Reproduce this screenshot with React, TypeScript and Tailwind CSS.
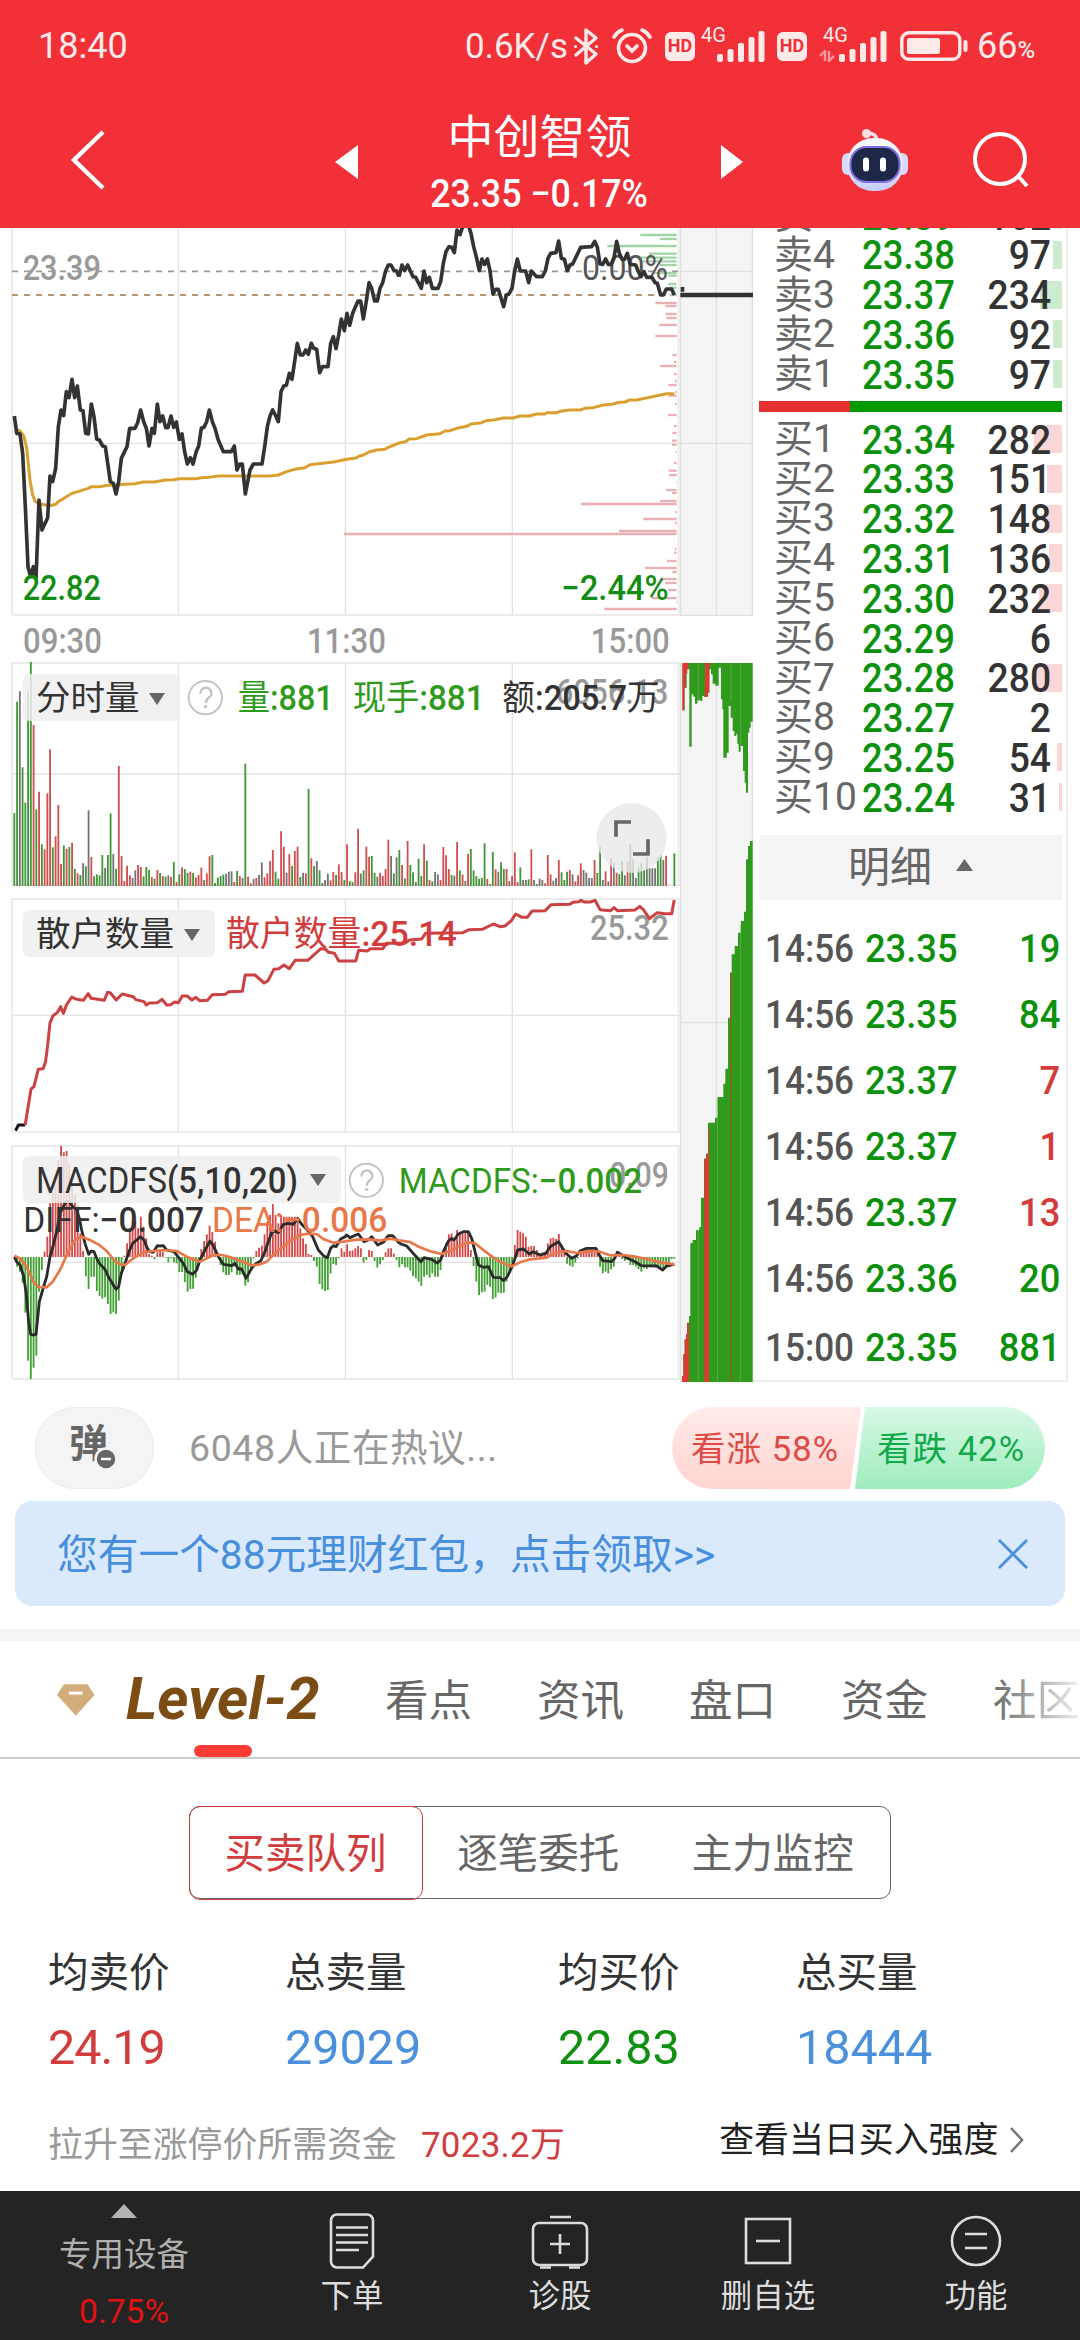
import type { ReactNode } from "react";
import clsx from "clsx";

const RED = "#d23c3c";
const GREEN = "#2f9a1c";
const GREY = "#999999";

// Chart coordinates use three units per pixel; the afternoon session starts 1020 units in.
const AFTERNOON = "translate(1020 0)";
const barX = (i: number) => 43 + 8.25 * i;

const priceMorning =
  "43,588 50,640 60,642 68,700 76,860 84,1040 92,1070 100,1040 108,1075 117,840 126,930 143,893 150,768 158,785 167,745 175,620 183,570 191,587 199,515 207,533 216,478 224,533 232,498 241,570 249,572 257,640 265,642 274,552 282,590 290,657 298,660 308,678 316,680 331,785 340,790 348,822 356,785 364,715 381,680 389,625 405,625 413,608 422,570 431,605 439,625 447,678 456,625 463,640 472,552 480,605 488,588 497,623 504,623 513,588 521,622 529,606 538,658 546,642 554,695 562,732 571,713 579,732 588,697 596,678 604,625 612,622 620,605 628,570 637,605 645,625 654,658 670,695 694,695 703,678 711,750 719,732 727,732 736,822 750,750 760,732 786,732 794,680 802,620 810,588 818,570 826,585 835,605 843,515 851,498 859,496 868,460 876,478 884,424 892,370 901,405 909,405 917,390 925,403 934,370 941,385 950,388 959,458 967,440 984,440 992,370 1000,350 1008,386 1016,345 1024,297 1033,332 1041,280 1049,316 1058,280 1074,243 1082,243 1090,297 1099,243 1107,188 1115,205 1124,243 1132,243 1140,205 1148,188 1157,152 1165,135 1173,135 1182,152 1190,153 1197,170";
const priceAfternoon =
  "177,170 186,135 194,152 203,135 219,170 227,172 244,205 252,153 260,188 268,172 277,205 294,205 302,185 310,130 318,95 327,80 335,82 343,98 351,30 360,44 368,20 385,15 393,40 401,80 410,115 418,152 426,117 434,133 442,117 450,152 459,222 467,208 475,208 491,260 499,225 507,222 516,205 524,153 532,117 541,153 557,153 566,188 574,153 590,170 607,170 616,153 624,115 632,100 648,98 656,63 664,115 673,118 682,152 690,135 698,132 722,82 755,80 764,64 772,82 780,132 788,133 797,117 805,133 814,133 822,115 830,64 838,100 846,117 854,118 862,100 871,133 887,135 895,155 903,170 912,155 920,172 936,172 945,188 952,190 962,225 970,225 979,207 995,207 1003,225";
const avgMorning =
  "50,628 62,635 72,650 80,685 90,780 98,825 106,845 120,852 150,857 167,853 175,845 216,820 265,805 274,800 298,800 325,796 348,795 372,793 405,791 430,786 463,786 497,780 521,779 538,776 588,776 604,773 628,772 654,768 810,768 835,765 860,755 884,748 915,743 930,734 967,730 1000,726 1040,718 1068,714 1078,708 1090,705 1107,696 1130,690 1155,688 1165,682 1197,669";
const avgAfternoon =
  "177,669 196,665 208,657 230,656 260,645 300,641 315,633 330,632 350,625 380,619 393,612 425,608 435,603 465,599 490,594 520,594 540,588 567,588 590,582 615,582 620,578 650,578 665,573 690,570 720,570 735,565 760,563 790,555 815,553 840,547 855,546 870,540 890,540 980,521 1003,521";

// Traded volume by price level: [y, bar start]
const levels: [number, number][] = [
  [45, 901], [57, 960], [78, 802], [101, 927], [113, 890], [124, 905], [135, 960], [159, 940], [167, 985], [192, 985], [203, 990], [225, 988],
  [249, 946], [258, 976], [282, 976], [294, 979], [315, 958], [348, 946], [405, 997], [426, 1002], [438, 960], [462, 1002], [483, 1005],
  [495, 985], [516, 1005], [527, 985], [552, 1005], [585, 984], [618, 1002], [639, 997], [662, 996], [674, 996], [696, 1007], [729, 1002],
  [752, 986], [765, 987], [786, 1008], [810, 978], [819, 996], [843, 960], [852, 722], [876, 1005], [897, 910], [909, 1005], [933, 837],
  [942, 12], [987, 1005], [998, 1002], [1023, 981], [1044, 915], [1056, 997], [1077, 960], [1089, 975], [1110, 984], [1134, 935], [1146, 1008], [1167, 793],
];

const volume =
  "g489 g155 k124 g352 g458 g124 g36 r225 g478 r425 g583 r598 r430 r298 g592 r559 r465 r642 g586 r596 g591 r578 g657 r670 g675 k640 g649 k481 r621 g679 g673 g676 g615 k654 g615 g490 k612 g656 r348 r618 r693 r647 r676 k684 k661 r645 r651 g679 g651 g660 r681 g686 r660 g669 r678 g680 k676 r681 g636 r696 g673 r652 g657 g669 r665 g669 r682 r675 r653 k690 r670 r619 g615 g699 g683 g678 g674 k671 k665 k664 r696 g663 r678 k684 g341 r680 r700 k687 r684 k675 k637 r682 r670 r633 r600 g665 g686 r544 r590 k668 r612 g648 r603 r590 g681 k668 r670 g417 r625 g648 k633 g661 k699 k690 k671 r691 r666 g675 r643 r666 g690 r583 g693 g696 r667 r536 k671 g661 r590 r621 g618 g669 k680 r668 r678 r657 r569 k618 g670 k622 g600 r645 g685 r573 g645 g667 k696 g626 g678 r583 g632 r690 g694 k666 k673 r690 r591 r616 r657 g675 k677 r576 g661 r674 k693 r612 g597 g661 g678 g686 g684 g580 r687 g702 g606 r658 k665 g637 g657 r657 k693 r678 r607 r696 g652 k690 k690 g688 r598 k690 g702 k686 k690 r700 r615 r673 k692 k684 r630 g667 g690 g665 r660 k673 r694 r676 r640 k660 k668 k684 k684 r630 g669 g590 k690 r664 k694 r624 k640 r668 g672 g634 k676 r634 g582 k628 k684 g652 g640 k660 g620 k655 k655 k655 g622 g615 k630 r617 g708 g708 g610".split(" ");

const volumeColor: Record<string, string> = { g: "#43953a", r: "#d04f4f", k: "#747474" };

const retail =
  "52,705 58,650 64,597 70,590 79,538 89,536 94,515 98,470 103,400 109,378 118,368 125,350 131,370 137,345 148,321 158,328 172,331 182,311 188,325 215,331 222,307 228,309 240,330 252,312 275,320 280,329 297,335 302,345 308,339 325,338 334,328 344,345 352,344 360,336 368,338 376,318 386,318 396,330 404,322 412,332 428,331 438,314 465,313 472,305 500,304 506,255 526,255 545,279 553,272 565,238 575,236 586,225 597,236 609,211 635,211 662,176 672,178 678,187 690,190 699,213 734,213 740,181 758,183 764,176 790,176 797,160 835,160 845,150 870,147 878,130 955,128 968,119 995,118 1018,102 1032,110 1042,108 1055,92 1064,72 1077,82 1088,82 1098,63 1125,62 1137,44 1175,43 1182,37 1195,35 1198,31 1206,36 1218,36 1228,31 1238,59 1260,62 1267,53 1274,62 1310,60 1320,49 1328,60 1340,86 1356,68 1372,71 1386,71 1391,30";

const MACD_ZERO = 366;
const macd = [
  366, 395, 410, 443, 533, 677, 732, 698, 662, 470, 405, 350, 305, 205, 172, 145, 75, 33, 52, 48, 90, 150, 178, 215, 295, 348, 424, 462, 425, 425, 468, 483, 491, 487, 507,
  537, 532, 537, 497, 415, 362, 325, 285, 258, 258, 280, 245, 275, 310, 358, 362, 373, 352, 345, 350, 368, 382, 370, 382, 385, 411, 411, 441, 470, 462, 461, 428, 390, 342,
  318, 298, 272, 291, 320, 355, 390, 412, 420, 420, 412, 395, 420, 420, 417, 452, 442, 400, 370, 348, 338, 332, 298, 260, 240, 207, 240, 265, 240, 245, 245, 245, 245, 245,
  255, 280, 310, 327, 357, 360, 378, 395, 447, 463, 468, 465, 416, 387, 390, 370, 340, 350, 328, 348, 346, 340, 333, 340, 383, 375, 345, 348, 378, 398, 388, 375, 352, 340,
  340, 356, 375, 397, 388, 397, 397, 407, 424, 430, 440, 453, 425, 420, 428, 415, 425, 425, 405, 355, 325, 298, 295, 315, 285, 293, 290, 290, 290, 345, 393, 440, 480, 472,
  470, 450, 455, 492, 487, 473, 474, 473, 440, 410, 385, 330, 285, 290, 295, 305, 336, 333, 333, 345, 355, 352, 350, 325, 310, 308, 312, 297, 330, 350, 386, 392, 395, 383,
  369, 355, 348, 345, 345, 345, 348, 355, 395, 415, 410, 415, 403, 395, 366, 362, 372, 378, 375, 390, 390, 395, 402, 410, 400, 402, 395, 390, 395, 395, 395, 400, 392, 385,
  372, 371,
];
const diffMorning =
  "43,366 50,380 60,390 70,420 78,470 86,560 92,598 99,600 108,598 112,560 118,500 128,465 140,425 150,365 160,330 170,290 180,235 190,215 198,200 208,200 218,215 230,225 238,250 245,285 255,325 266,358 274,348 282,350 290,370 300,388 315,403 325,425 348,463 356,455 364,415 375,385 389,345 398,325 410,315 422,305 432,315 440,335 448,350 460,352 472,332 480,333 490,332 500,345 522,350 538,370 550,385 562,410 578,418 590,405 600,375 615,345 630,318 640,332 655,365 670,388 695,392 705,385 715,402 725,402 738,430 755,400 765,388 782,378 795,350 805,320 815,293 825,288 835,293 850,268 865,265 880,268 893,250 905,268 922,285 938,305 955,345 970,362 982,368 992,340 1000,332 1008,335 1022,312 1035,305 1040,300 1050,308 1075,297 1092,320 1105,315 1115,305 1133,330 1150,322 1165,302 1178,302 1198,325";
const diffAfternoon =
  "178,325 200,333 215,350 235,372 243,380 252,368 275,373 292,384 302,375 310,350 325,318 335,310 342,315 355,297 370,290 385,290 395,310 405,350 415,390 430,397 445,395 460,427 480,428 491,437 502,425 515,398 525,370 533,345 550,342 568,357 580,350 600,360 618,355 630,335 656,320 668,340 678,355 695,370 710,362 720,348 740,340 768,340 778,360 788,377 815,380 824,370 832,352 860,368 885,380 905,392 950,393 968,405 980,393 1003,388";
const deaMorning =
  "43,362 60,370 80,395 100,440 115,456 140,457 158,440 180,405 205,350 225,315 245,305 270,315 295,328 320,348 345,378 360,388 375,390 400,370 430,352 460,348 490,345 530,348 560,365 600,380 640,360 665,360 690,366 720,377 755,391 780,388 800,380 830,350 870,318 900,300 925,296 950,297 970,312 1000,323 1030,320 1070,314 1110,313 1140,317 1170,311 1198,316";
const deaAfternoon =
  "178,316 210,321 240,337 275,350 305,357 330,348 360,332 385,322 405,325 430,345 460,368 490,385 515,394 540,382 570,373 620,368 650,352 680,348 710,354 740,350 775,349 810,361 850,360 880,364 920,372 960,382 1003,388";

// Call auction: [x, bar end] from the top edge, then from the bottom edge
const auctionTop: [number, number][] = [
  [1028, 178], [1034, 110], [1040, 55], [1048, 287], [1055, 130], [1060, 137], [1065, 158], [1072, 148], [1082, 150], [1087, 135], [1092, 137], [1103, 125], [1108, 55],
  [1113, 70], [1118, 98], [1126, 104], [1136, 50], [1143, 145], [1147, 175], [1150, 320], [1160, 305], [1166, 165], [1172, 200], [1178, 240], [1183, 255], [1189, 248], [1192, 278],
  [1196, 302], [1202, 285], [1209, 360], [1214, 395], [1218, 425], [1224, 245], [1228, 230], [1232, 212], [1238, 212],
];
const auctionBottom: [number, number][] = [
  [1026, 2175], [1030, 2110], [1034, 2065], [1038, 2050], [1041, 2015], [1047, 1995], [1051, 1776], [1058, 1767], [1068, 1738], [1078, 1728], [1083, 1640], [1092, 1523],
  [1098, 1508], [1104, 1415], [1125, 1400], [1133, 1338], [1150, 1298], [1156, 1253], [1164, 1100], [1170, 965], [1175, 910], [1184, 885], [1194, 845], [1203, 810],
  [1212, 782], [1218, 625], [1224, 585], [1230, 570], [1238, 570],
];
const steps = (bars: [number, number][], base: number) =>
  `M${bars[0][0]} ${base}` + bars.map(([x, y]) => `H${x}V${y}`).join("") + `V${base}Z`;

const asks = [
  { n: 5, price: "23.39", qty: 162, bar: 8 },
  { n: 4, price: "23.38", qty: 97, bar: 9 },
  { n: 3, price: "23.37", qty: 234, bar: 22 },
  { n: 2, price: "23.36", qty: 92, bar: 9 },
  { n: 1, price: "23.35", qty: 97, bar: 9 },
];
const bids = [
  { n: 1, price: "23.34", qty: 282, bar: 28 },
  { n: 2, price: "23.33", qty: 151, bar: 15 },
  { n: 3, price: "23.32", qty: 148, bar: 15 },
  { n: 4, price: "23.31", qty: 136, bar: 13 },
  { n: 5, price: "23.30", qty: 232, bar: 23 },
  { n: 6, price: "23.29", qty: 6, bar: 0 },
  { n: 7, price: "23.28", qty: 280, bar: 28 },
  { n: 8, price: "23.27", qty: 2, bar: 0 },
  { n: 9, price: "23.25", qty: 54, bar: 5 },
  { n: 10, price: "23.24", qty: 31, bar: 3 },
];
const trades = [
  { time: "14:56", price: "23.35", qty: 19, up: false },
  { time: "14:56", price: "23.35", qty: 84, up: false },
  { time: "14:56", price: "23.37", qty: 7, up: true },
  { time: "14:56", price: "23.37", qty: 1, up: true },
  { time: "14:56", price: "23.37", qty: 13, up: true },
  { time: "14:56", price: "23.36", qty: 20, up: false },
  { time: "15:00", price: "23.35", qty: 881, up: false },
];

function Signal() {
  return (
    <svg viewBox="0 0 48 31" className="h-[31px] w-[48px]" fill="#ffeaea">
      <rect x="0" y="23" width="6" height="8" rx="2" />
      <rect x="10.5" y="18" width="6" height="13" rx="2" />
      <rect x="21" y="12" width="6" height="19" rx="2" />
      <rect x="31.5" y="6" width="6" height="25" rx="2" />
      <rect x="41.5" y="0" width="6" height="31" rx="2" />
    </svg>
  );
}

function Hd() {
  return (
    <span className="flex h-[29px] w-[30px] items-center justify-center rounded-[6px] bg-[#ffeaea] text-[18px] leading-none font-bold text-[#ef3037]">
      HD
    </span>
  );
}

function StatusBar() {
  return (
    <div className="flex h-[92px] items-center pr-[43px] pl-[38px] text-[36px] leading-none text-[#ffeaea]">
      <span className="w-[427px]">18:40</span>
      <span className="w-[109px] text-[35px]">0.6K/s</span>
      <svg viewBox="0 0 24 37" className="h-[37px] w-[24px]" fill="none" stroke="#ffeaea" strokeWidth="3.4" strokeLinejoin="round" strokeLinecap="round">
        <path d="M2 10 22 26 12 35V2l10 8L2 27" />
        <path d="M1.5 18.5h.1M22.4 18.5h.1" strokeWidth="3" />
      </svg>
      <svg viewBox="0 0 40 36" className="ml-[14px] h-[36px] w-[40px]" fill="none" stroke="#ffeaea" strokeWidth="3.6" strokeLinecap="round">
        <circle cx="20" cy="20" r="13.5" />
        <path d="M2 9Q5 4 10 2M38 9Q35 4 30 2M15 18l5 5 5-5" />
      </svg>
      <span className="ml-[13px]">
        <Hd />
      </span>
      <span className="relative ml-[22px]">
        <Signal />
        <span className="absolute -top-[6px] -left-[16px] text-[20px] leading-none">4G</span>
      </span>
      <span className="ml-[12px]">
        <Hd />
      </span>
      <span className="relative ml-[32px]">
        <Signal />
        <span className="absolute -top-[6px] -left-[16px] text-[20px] leading-none">4G</span>
        <svg viewBox="0 0 16 12" className="absolute bottom-0 -left-[20px] h-[12px] w-[16px]" fill="none" stroke="#f79a9d" strokeWidth="2.4">
          <path d="M6 11V1L1 6M10 1v10l5-5" />
        </svg>
      </span>
      <svg viewBox="0 0 68 30" className="ml-[13px] h-[30px] w-[68px]" fill="none">
        <rect x="1.8" y="1.8" width="58" height="26.4" rx="7" stroke="#ffeaea" strokeWidth="3.4" />
        <rect x="7" y="7" width="33" height="16" rx="2.5" fill="#ffeaea" />
        <path d="M65.5 11v8" stroke="#ffeaea" strokeWidth="4" strokeLinecap="round" />
      </svg>
      <span className="ml-[9px] whitespace-nowrap">
        66<span className="text-[24px] font-medium">%</span>
      </span>
    </div>
  );
}

function Robot() {
  return (
    <svg viewBox="0 0 66 62" className="h-[62px] w-[66px]">
      <defs>
        <linearGradient id="shell" x1="0" y1="0" x2="0" y2="1">
          <stop offset="0" stopColor="#ffffff" />
          <stop offset="1" stopColor="#c5cdf6" />
        </linearGradient>
      </defs>
      <path d="M34 12Q36 5 26 4" fill="none" stroke="#f6dfee" strokeWidth="3.5" />
      <circle cx="24.500" cy="4.500" r="4.500" fill="#ffdfe3" />
      <rect x="0" y="24" width="12" height="22" rx="6" fill="#d5dafa" />
      <rect x="54" y="24" width="12" height="22" rx="6" fill="#d5dafa" />
      <rect x="5" y="9" width="56" height="53" rx="26" fill="url(#shell)" />
      <rect x="8.500" y="18" width="49" height="35" rx="16" fill="#1d2747" stroke="#7f6fe0" strokeWidth="2" />
      <rect x="21" y="28.500" width="6" height="14" rx="3" fill="#fff" />
      <rect x="38" y="28.500" width="6" height="14" rx="3" fill="#fff" />
    </svg>
  );
}

function TitleBar() {
  return (
    <div className="flex h-[136px] items-center pr-[50px] pl-[70px] text-white">
      <svg viewBox="0 0 36 60" className="mt-[-1px] h-[60px] w-[36px]" fill="none" stroke="#fff" strokeWidth="4.4">
        <path d="M33 2 4 30l29 28" />
      </svg>
      <svg viewBox="0 0 23 34" className="mt-[3px] ml-[229px] h-[34px] w-[23px]" fill="#fff">
        <path d="M23 0v34L0 17z" />
      </svg>
      <div className="flex w-[363px] flex-col items-center pt-[5px]">
        <h1 className="text-[46px] leading-[60px]">中创智领</h1>
        <div className="mt-[3px] scale-x-[.93] text-[38.500px] leading-[48px] font-medium whitespace-nowrap">23.35 −0.17%</div>
      </div>
      <svg viewBox="0 0 22 34" className="mt-[3px] h-[34px] w-[22px]" fill="#fff">
        <path d="M0 0v34l22-17z" />
      </svg>
      <span className="ml-[99px]">
        <Robot />
      </span>
      <svg viewBox="0 0 56 56" className="ml-[65px] h-[56px] w-[56px]" fill="none" stroke="#fff" strokeWidth="4">
        <circle cx="27" cy="27" r="25" />
        <path d="M45 44l9 10" />
      </svg>
    </div>
  );
}

function Grid({ top, mid, bottom }: { top: number; mid: number; bottom: number }) {
  return (
    <g stroke="#e3e3e3" strokeWidth="4">
      <path d={`M36 ${top}V${bottom}M2036 ${top}V${bottom}M36 ${bottom}H2040`} strokeWidth="6" stroke="#ebebeb" />
      <path d={`M535 ${top}V${bottom}M1036 ${top}V${bottom}M1537 ${top}V${bottom}M36 ${mid}H2040`} />
    </g>
  );
}

interface LabelProps {
  x: number;
  y: number;
  w: number;
  color: string;
  name?: string;
  bold?: boolean;
  children: string;
}

function Label({ x, y, w, color, name, bold, children }: LabelProps) {
  return (
    <text x={x} y={y} textLength={w} lengthAdjust="spacingAndGlyphs" fill={color} fontSize="105" fontWeight={bold ? 500 : 400}>
      {name && <tspan fontWeight="400">{name}</tspan>}
      {children}
    </text>
  );
}

function Indicator({ children, className }: { children: ReactNode; className: string }) {
  return (
    <button className={clsx("absolute top-[12px] left-[23px] flex h-[47px] items-center justify-between rounded-[6px] bg-[#eeeeee]/85 pr-[15px] pl-[13px] text-[34.500px] leading-none text-[#333]", className)}>
      {children}
      <svg viewBox="0 0 16 12" className="h-[12px] w-[16px]" fill="#666">
        <path d="M0 0h16L8 12z" />
      </svg>
    </button>
  );
}

function Help({ x, y }: { x: number; y: number }) {
  return (
    <g>
      <circle cx={x} cy={y} r="50" fill="none" stroke="#c4c4c4" strokeWidth="6" />
      <path d={`M${x - 14} ${y - 12}a16 16 0 1 1 24 12q-8 6-8 16`} fill="none" stroke="#c0c0c0" strokeWidth="7" />
      <circle cx={x + 1} cy={y + 27} r="5" fill="#c0c0c0" />
    </g>
  );
}

function PriceChart() {
  return (
    <svg viewBox="0 24 2040 1164" className="h-[388px] w-[680px]">
      <Grid top={24} mid={670} bottom={1185} />
      <path d="M36 154H2036" stroke="#999" strokeWidth="5" strokeDasharray="18 18" />
      <path d="M36 225H2000" stroke="#b3966c" strokeWidth="6" strokeDasharray="18 18" />
      {levels.map(([y, x]) => (
        <path key={y} d={`M${x + 1020} ${y}H2030`} stroke={y < 240 ? "#a5d3a8" : "#eab0b2"} strokeWidth="7" />
      ))}
      <Label x={68} y={180} w={235} color={GREY} bold>23.39</Label>
      <Label x={1746} y={179} w={258} color="#555">0.00%</Label>
      <g fill="none" stroke="#d9a030" strokeWidth="9" strokeLinejoin="round">
        <polyline points={avgMorning} />
        <polyline points={avgAfternoon} transform={AFTERNOON} />
      </g>
      <g fill="none" stroke="#333" strokeWidth="11" strokeLinejoin="round">
        <polyline points={priceMorning} />
        <polyline points={priceAfternoon} transform={AFTERNOON} />
      </g>
      <Label x={68} y={1139} w={235} color="#128c12" bold>22.82</Label>
      <Label x={1684} y={1139} w={322} color="#128c12" bold>−2.44%</Label>
    </svg>
  );
}

function VolumeChart() {
  return (
    <div className="relative h-[226px]">
      <svg viewBox="0 36 2040 678" className="h-[226px] w-[680px]">
        <path d="M36 39H2040" stroke="#ebebeb" strokeWidth="6" />
        <Grid top={36} mid={372} bottom={706} />
        {volume.map((bar, i) => (
          <path key={i} d={`M${barX(i)} 708V${bar.slice(1)}`} stroke={volumeColor[bar[0]]} strokeWidth="5.500" />
        ))}
      </svg>
      <Indicator className="w-[157px] pt-[2px]">分时量</Indicator>
      <svg viewBox="0 36 2040 678" className="absolute top-0 left-0 h-[226px] w-[680px]">
        <Help x={616} y={143} />
        <Label x={1668} y={162} w={337} color={GREY} bold>6056.13</Label>
        <Label x={713} y={180} w={288} color={GREEN} name="量" bold>:881</Label>
        <Label x={1058} y={180} w={396} color={GREEN} name="现手" bold>:881</Label>
        <text x={1507} y={180} textLength={472} lengthAdjust="spacingAndGlyphs" fill="#333" fontSize="105" fontWeight="400">
          额<tspan fontWeight="500">:205.7</tspan>万
        </text>
        <circle cx="1895" cy="564" r="105" fill="#e8e8e8" fillOpacity=".8" />
        <path d="M1848 560V516H1893M1944 568V612H1899" fill="none" stroke="#666" strokeWidth="11" />
      </svg>
    </div>
  );
}

function RetailChart() {
  return (
    <div className="relative mt-[10px] h-[236px]">
      <svg viewBox="0 24 2040 708" className="h-[236px] w-[680px]">
        <path d="M36 27H2040" stroke="#ebebeb" strokeWidth="6" />
        <Grid top={24} mid={376} bottom={726} />
      </svg>
      <Indicator className="w-[192px] pt-[2px]">散户数量</Indicator>
      <svg viewBox="0 24 2040 708" className="absolute top-0 left-0 h-[236px] w-[680px]">
        <Label x={1770} y={151} w={236} color={GREY} bold>25.32</Label>
        <g transform="scale(1.454 1)" fill="none" strokeWidth="3" strokeLinejoin="round">
          <polyline points="32,722 38,705 52,705" stroke="#111" vectorEffect="non-scaling-stroke" />
          <polyline points={retail} stroke="#cc4141" vectorEffect="non-scaling-stroke" />
        </g>
        <Label x={678} y={168} w={692} color={RED} name="散户数量" bold>:25.14</Label>
      </svg>
    </div>
  );
}

function MacdChart() {
  return (
    <div className="relative mt-[10px] h-[238px]">
      <svg viewBox="0 27 2040 714" className="h-[238px] w-[680px]">
        <path d="M36 33H2040" stroke="#ebebeb" strokeWidth="6" />
        <Grid top={30} mid={382} bottom={732} />
        {macd.map((y, i) => (
          <path key={i} d={`M${barX(i)} ${MACD_ZERO}V${y}`} stroke={y < MACD_ZERO ? "#d34a4a" : "#43a034"} strokeWidth="5.500" />
        ))}
        <g fill="none" stroke="#2b2b2b" strokeWidth="8.500" strokeLinejoin="round">
          <polyline points={diffMorning} />
          <polyline points={diffAfternoon} transform={AFTERNOON} />
        </g>
        <g fill="none" stroke="#e8774a" strokeWidth="8" strokeLinejoin="round">
          <polyline points={deaMorning} />
          <polyline points={deaAfternoon} transform={AFTERNOON} />
        </g>
      </svg>
      <Indicator className="w-[318px]">
        <svg viewBox="0 0 264 46" className="h-[46px] w-[264px]">
          <text x="0" y="36" textLength="262" lengthAdjust="spacingAndGlyphs" fill="#333" fontSize="36">
            MACDFS<tspan fontWeight="500">(5,10,20)</tspan>
          </text>
        </svg>
      </Indicator>
      <svg viewBox="0 27 2040 714" className="absolute top-0 left-0 h-[238px] w-[680px]">
        <Help x={1099} y={136} />
        <Label x={1828} y={156} w={178} color={GREY} bold>0.09</Label>
        <Label x={1196} y={174} w={730} color={GREEN} name="MACDFS:" bold>−0.002</Label>
        <Label x={70} y={290} w={542} color="#333" name="DIFF:" bold>−0.007</Label>
        <Label x={636} y={290} w={526} color="#e8774a" name="DEA:" bold>−0.006</Label>
      </svg>
    </div>
  );
}

function AuctionStrip() {
  return (
    <div className="flex w-[73px] flex-col justify-between">
      <svg viewBox="1020 24 219 1164" className="h-[388px] w-[73px]">
        <path d="M1020 24H1239V1188H1020z" fill="#f4f4f4" />
        <path d="M1022 24V1188M1129 24V1188M1237 24V1188M1020 154H1239M1020 670H1239M1020 1186H1239" stroke="#e0e0e0" strokeWidth="4" />
        <path d="M1021 225H1239M1022 208H1033" stroke="#333" strokeWidth="14" />
      </svg>
      <svg viewBox="1020 36 219 2157" className="h-[719px] w-[73px]">
        <path d="M1020 36H1239V2193H1020z" fill="#f4f4f4" />
        <path d="M1022 36V2193M1129 36V2193M1237 36V2193M1020 1115H1239" stroke="#e0e0e0" strokeWidth="4" />
        <path d={steps(auctionTop, 36)} fill={GREEN} />
        <path d="M1025 36H1046V50H1042V68H1037V110H1033V178H1027V36ZM1095 36H1111V45H1108V125H1104V137H1094Z" fill="#dc3b34" />
        <path d={steps(auctionBottom, 2193)} fill={GREEN} />
        <path d="M1026 2193V2175H1030V2110H1034V2065H1038V2050H1041V2015H1047V2193ZM1093 2193V1523H1099V1508H1104V1435H1107V2193Z" fill="#dc3b34" />
        <path d="M1172 2193V965" stroke="#9a5a1c" strokeWidth="4" />
        <path d="M1075 36V150M1173 36V150M1202 36V285M1075 2193V1740M1132 2193V1340M1202 2193V820" stroke="#6cb85e" strokeWidth="2" />
      </svg>
    </div>
  );
}

interface Quote {
  n: number;
  price: string;
  qty: number;
  bar: number;
}

function QuoteRow({ side, quote }: { side: "卖" | "买"; quote: Quote }) {
  return (
    <div className="relative flex h-[39.800px] items-center pr-[11px] pl-[15px] text-[40.500px] leading-none">
      <div className={clsx("absolute top-[6px] right-0 h-[28px]", side === "卖" ? "bg-[#cdebcf]" : "bg-[#fad6d7]")} style={{ width: quote.bar }} />
      <span className="w-[88px] pt-[1px] text-[39px] whitespace-nowrap text-[#666]">
        {side}
        {quote.n}
      </span>
      <span className="relative origin-left scale-x-[.9] pt-[2px] font-medium text-[#0c910c]">{quote.price}</span>
      <span className="relative ml-auto origin-right scale-x-[.92] pt-[2px] font-medium text-[#333]">{quote.qty}</span>
    </div>
  );
}

function OrderBook() {
  return (
    <div className="h-[1154px] w-[315px] overflow-hidden border-r-2 border-b-2 border-[#ececec] pr-[4px] pl-[6px]">
      <div className="-mt-[33px]">
        {asks.map((q) => (
          <QuoteRow key={q.n} side="卖" quote={q} />
        ))}
      </div>
      <div className="mt-[7px] mb-[7px] flex h-[11px]">
        <div className="w-[91px] bg-[#e63030]" />
        <div className="flex-1 bg-[#009a00]" />
      </div>
      {bids.map((q) => (
        <QuoteRow key={q.n} side="买" quote={q} />
      ))}
      <div className="mt-[18px] flex h-[65px] items-center justify-center gap-[24px] bg-[#f4f4f4] pt-[2px] text-[42px] leading-none text-[#666]">
        明细
        <svg viewBox="0 0 17 12" className="mt-[-6px] h-[12px] w-[17px]" fill="#666">
          <path d="M0 12h17L8.500 0z" />
        </svg>
      </div>
      <div className="mt-[17px]">
        {trades.map((t, i) => (
          <div key={i} className="flex h-[66px] items-center pr-[2px] pl-[6px] text-[39px] leading-none font-medium last:h-[72px]">
            <span className="w-[100px] origin-left scale-x-[.9] text-[#555]">{t.time}</span>
            <span className="origin-left scale-x-[.93] text-[#0c910c]">{t.price}</span>
            <span className={clsx("ml-auto origin-right scale-x-[.93]", t.up ? "text-[#d33b3b]" : "text-[#0c910c]")}>{t.qty}</span>
          </div>
        ))}
      </div>
    </div>
  );
}

function Discussion() {
  return (
    <div className="flex h-[119px] items-center pt-[13px] pr-[35px] pl-[35px]">
      <div className="relative h-[82px] w-[119px] rounded-[40px] border border-[#ececec] bg-[#f4f4f4]">
        <span className="absolute top-[14px] left-[33px] text-[39px] leading-[44px] font-bold text-[#666]">弹</span>
        <svg viewBox="0 0 24 24" className="absolute top-[39px] left-[58px] h-[24px] w-[24px]">
          <circle cx="12" cy="12" r="10.500" fill="#666" stroke="#f4f4f4" strokeWidth="2.500" />
          <path d="M7 12h10" stroke="#fff" strokeWidth="2.500" />
        </svg>
      </div>
      <span className="ml-[35px] pt-[2px] text-[37.500px] leading-none tracking-[.6px] text-[#999]">6048人正在热议...</span>
      <div className="relative ml-auto flex h-[82px] w-[373px] text-[34.500px] leading-none">
        <svg viewBox="0 0 373 82" className="absolute inset-0 h-[82px] w-[373px]">
          <defs>
            <linearGradient id="bull" x1="0" y1="0" x2="0" y2="1">
              <stop offset="0" stopColor="#ffebea" />
              <stop offset="1" stopColor="#ffd4d0" />
            </linearGradient>
            <linearGradient id="bear" x1="0" y1="0" x2="0" y2="1">
              <stop offset="0" stopColor="#d8f8e5" />
              <stop offset="1" stopColor="#9eecbd" />
            </linearGradient>
          </defs>
          <path d="M41 0H189L178 82H41A41 41 0 0 1 41 0Z" fill="url(#bull)" />
          <path d="M193 0H332A41 41 0 0 1 332 82H183Z" fill="url(#bear)" />
        </svg>
        <span className="relative flex w-[186px] items-center pt-[3px] pl-[19px] tracking-[1.1px] whitespace-nowrap text-[#e04a45]">看涨 58%</span>
        <span className="relative flex items-center pt-[3px] pl-[19px] tracking-[1.1px] whitespace-nowrap text-[#12a94a]">看跌 42%</span>
      </div>
    </div>
  );
}

function Tabs() {
  return (
    <div className="relative flex h-[118px] items-center overflow-hidden border-b-2 border-[#cccccc] pt-[5px] pl-[56px] text-[43.500px] leading-none text-[#666]">
      <svg viewBox="0 0 40 34" className="mt-[-4px] h-[34px] w-[40px]">
        <path d="M8 1h24l7 11-19 21L1 12z" fill="#d2ad7b" />
        <path d="M13 10h14" stroke="#fff" strokeWidth="3" />
      </svg>
      <span className="mt-[-4px] ml-[31px] w-[262px] origin-left scale-x-[1.02] text-[58.500px] font-bold text-[#7b4c13] italic">Level-2</span>
      <span className="w-[152px] shrink-0">看点</span>
      <span className="w-[152px] shrink-0">资讯</span>
      <span className="w-[152px] shrink-0">盘口</span>
      <span className="w-[152px] shrink-0">资金</span>
      <span className="shrink-0">社区</span>
      <div className="absolute top-0 right-0 h-[100px] w-[90px] bg-linear-to-r from-white/0 to-white/90" />
      <div className="absolute bottom-0 left-[194px] h-[12px] w-[58px] rounded-[6px] bg-[#fc3c34]" />
    </div>
  );
}

const stats = [
  { label: "均卖价", value: "24.19", className: "text-[#d23c3c] tracking-[-1px]" },
  { label: "总卖量", value: "29029", className: "text-[#4a90dd]" },
  { label: "均买价", value: "22.83", className: "text-[#109010]" },
  { label: "总买量", value: "18444", className: "text-[#4a90dd]" },
];

function LevelTwo() {
  return (
    <div className="h-[432px] pt-[47px] leading-none">
      <div className="mx-auto flex h-[93px] w-[702px] rounded-[11px] border-[1.500px] border-[#666] text-[40.500px] text-[#666]">
        <div className="-m-[1.500px] flex w-[234px] items-center justify-center rounded-[11px] border-[1.500px] border-[#cf3f3f] pt-[3px] text-[#d23c3c]">买卖队列</div>
        <div className="flex flex-1 items-center justify-center pt-[3px]">逐笔委托</div>
        <div className="flex flex-1 items-center justify-center pt-[3px]">主力监控</div>
      </div>
      <div className="mt-[51px] grid grid-cols-[237px_273px_238px_1fr] pl-[48px]">
        {stats.map((s) => (
          <div key={s.label}>
            <div className="text-[40.500px] leading-[46px] text-[#333]">{s.label}</div>
            <div className={clsx("mt-[26px] text-[48.500px] leading-[52px]", s.className)}>{s.value}</div>
          </div>
        ))}
      </div>
      <div className="mt-[42px] flex items-center pl-[48px] text-[34.900px] leading-[60px] text-[#999]">
        拉升至涨停价所需资金
        <span className="ml-[24px] tracking-[.3px] text-[#d23c3c]">7023.2万</span>
        <span className="mt-[-11px] ml-[154px] text-[#222]">查看当日买入强度</span>
        <svg viewBox="0 0 16 26" className="mt-[-13px] ml-[11px] h-[26px] w-[16px]" fill="none" stroke="#777" strokeWidth="2.500">
          <path d="M2 1l11 12L2 25" />
        </svg>
      </div>
    </div>
  );
}

const actions: { label: string; icon: ReactNode }[] = [
  {
    label: "下单",
    icon: (
      <>
        <path d="M15 1.500h30a6 6 0 0 1 6 6v36l-10 11H15a6 6 0 0 1-6-6v-41a6 6 0 0 1 6-6z" />
        <path d="M14 14.500h32M14 22h32M14 29.500h32M14 37h23" />
      </>
    ),
  },
  {
    label: "诊股",
    icon: (
      <>
        <rect x="3" y="10" width="54" height="42" rx="6" />
        <path d="M20 4h21M20 31h20M30 21v20M10 54.500h11M39 54.500h11" />
      </>
    ),
  },
  {
    label: "删自选",
    icon: (
      <>
        <rect x="8" y="6" width="44" height="44" />
        <path d="M18 28h24" />
      </>
    ),
  },
  {
    label: "功能",
    icon: (
      <>
        <circle cx="30" cy="28" r="24" />
        <path d="M19 21h22M19 35h22" />
      </>
    ),
  },
];

function BottomBar() {
  return (
    <div className="flex h-[149px] bg-[#242424] text-[31.500px] leading-none text-[#dcdcdc]">
      <div className="flex w-[248px] flex-col items-center pt-[13px]">
        <svg viewBox="0 0 26 14" className="h-[14px] w-[26px]" fill="#b4b4b4">
          <path d="M0 14h26L13 0z" />
        </svg>
        <span className="mt-[21px] text-[32.500px] leading-[32px] text-[#b0b0b0]">专用设备</span>
        <span className="mt-[24px] text-[33.500px] leading-[34px] text-[#e01212]">0.75%</span>
      </div>
      {actions.map((a) => (
        <div key={a.label} className="flex w-[208px] flex-col items-center pt-[22px]">
          <svg viewBox="0 0 60 57" className="h-[57px] w-[60px]" fill="none" stroke="#dcdcdc" strokeWidth="2.600">
            {a.icon}
          </svg>
          <span className="mt-[11px] leading-[32px]">{a.label}</span>
        </div>
      ))}
    </div>
  );
}

export default function App() {
  return (
    <div className="h-[2340px] w-[1080px] overflow-hidden bg-white [font-family:Roboto,'Noto_Sans_CJK_SC',sans-serif]">
      <header className="h-[228px] bg-[#f13038]">
        <StatusBar />
        <TitleBar />
      </header>
      <main className="flex h-[1154px]">
        <div className="w-[680px]">
          <PriceChart />
          <div className="flex h-[46px] items-center justify-between pt-[4px] pr-[10px] pl-[23px] text-[35px] leading-none font-medium text-[#999]">
            <span className="origin-left scale-x-[.89]">09:30</span>
            <span className="scale-x-[.89]">11:30</span>
            <span className="origin-right scale-x-[.89]">15:00</span>
          </div>
          <VolumeChart />
          <RetailChart />
          <MacdChart />
        </div>
        <AuctionStrip />
        <OrderBook />
      </main>
      <Discussion />
      <div className="mx-[15px] flex h-[105px] items-center justify-between rounded-[17px] bg-[#dae9fc] pr-[37px] pl-[42px] text-[41px] leading-none text-[#478fdc]">
        <span className="origin-left scale-x-[.993] pt-[3px]">您有一个88元理财红包，点击领取&gt;&gt;</span>
        <svg viewBox="0 0 30 30" className="h-[30px] w-[30px]" fill="none" stroke="#478fdc" strokeWidth="2.800">
          <path d="M1 1l28 28M29 1L1 29" />
        </svg>
      </div>
      <div className="mt-[23px] h-[12px] bg-[#f4f4f4]" />
      <Tabs />
      <LevelTwo />
      <BottomBar />
    </div>
  );
}
